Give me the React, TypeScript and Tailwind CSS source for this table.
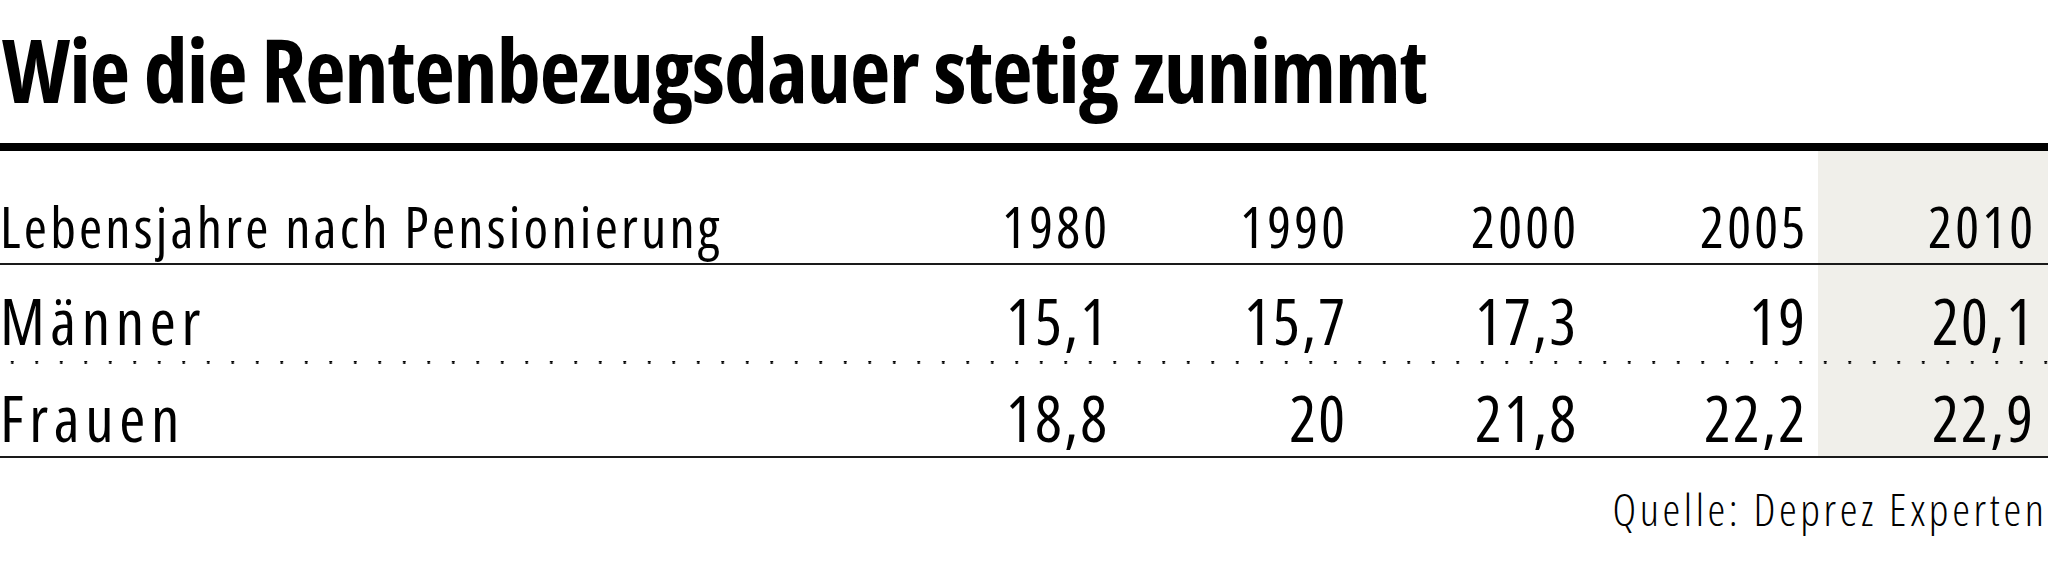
import React from "react";

const years = ["1980", "1990", "2000", "2005", "2010"];
const rows = [
  { label: "Männer", values: ["15,1", "15,7", "17,3", "19", "20,1"] },
  { label: "Frauen", values: ["18,8", "20", "21,8", "22,2", "22,9"] },
];
const cellCls = [
  "pr-[15px]",
  "pr-[15px]",
  "pr-[15px]",
  "pr-[13px]",
  "pr-[15px] bg-[#f0efea]",
];
const gridCls =
  "grid grid-cols-[893px_229px_238px_231px_227px_230px]";

export default function App() {
  return (
    <div className="w-[2048px] h-[561px] bg-white text-black font-['Open_Sans',sans-serif] overflow-hidden">
      <h1 className="pt-[25px] pl-[2px] text-[88px] leading-none font-bold [font-stretch:75%] tracking-[-1px] whitespace-nowrap">
        Wie die Rentenbezugsdauer stetig zunimmt
      </h1>
      <div className="mt-[30px] h-[8px] bg-black" />
      <div className={`${gridCls} h-[114px] border-b-2 border-[#1a1a1a] text-[56px] leading-none [font-stretch:75%] tracking-[3.2px]`}>
        <div className="flex items-end pb-[9px] whitespace-nowrap">Lebensjahre nach Pensionierung</div>
        {years.map((y, i) => (
          <div key={y} className={`flex items-end justify-end pb-[9px] ${cellCls[i]}`}>
            <span className="mr-[-3.2px]">{y}</span>
          </div>
        ))}
      </div>
      {rows.map((r, ri) => (
        <React.Fragment key={r.label}>
          <div
            className={`${gridCls} ${ri === 0 ? "h-[96px]" : "h-[94px] border-b-2 border-[#1a1a1a]"} text-[63px] leading-none [font-stretch:75%] tracking-[2.2px]`}
          >
            <div className={`flex items-end whitespace-nowrap tracking-[5.6px] ${ri === 0 ? "pb-[9px]" : "pb-[7px]"}`}>{r.label}</div>
            {r.values.map((v, i) => (
              <div
                key={i}
                className={`flex items-end justify-end ${ri === 0 ? "pb-[9px]" : "pb-[7px]"} ${cellCls[i]}`}
              >
                <span className="mr-[-2.2px]">{v}</span>
              </div>
            ))}
          </div>
          {ri === 0 && (
            <div className={`${gridCls} h-[3px]`}>
              <div className="col-span-5 bg-fixed bg-[radial-gradient(circle,#000_1.2px,transparent_1.7px)] bg-[length:24.5px_3px]" />
              <div className="bg-[#f0efea] bg-fixed bg-[radial-gradient(circle,#000_1.2px,transparent_1.7px)] bg-[length:24.5px_3px]" />
            </div>
          )}
        </React.Fragment>
      ))}
      <div className="mt-[28px] pr-[4px] flex justify-end text-[45px] leading-none font-light [font-stretch:75%] tracking-[3.6px] whitespace-nowrap">
        <span className="mr-[-3.6px]">Quelle: Deprez Experten</span>
      </div>
    </div>
  );
}
